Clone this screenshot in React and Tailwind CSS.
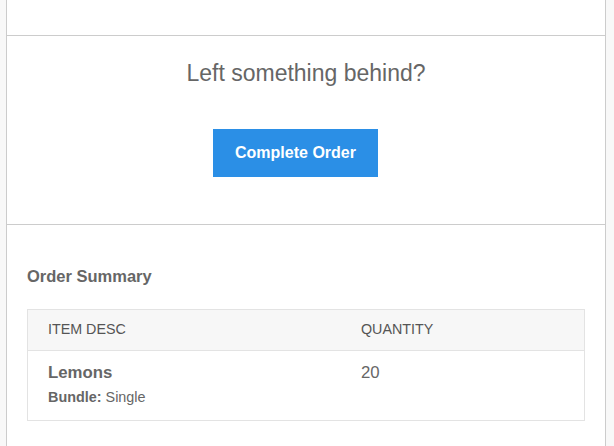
import React from 'react';

const App = () => {
  return (
    <div
      className="min-h-[446px] bg-[#f8f8f8] px-[6px]"
      style={{ fontFamily: '"Liberation Sans", Arial, sans-serif' }}
    >
      <div className="w-[600px] min-h-[446px] bg-white border-x border-[#cccccc]">
        <div className="h-[36px] border-b border-[#cccccc]" />

        <div className="h-[189px] border-b border-[#cccccc] pt-[23px]">
          <h1 className="text-center text-[23px] leading-[28px] text-[#666666]">
            Left something behind?
          </h1>
          <div className="mt-[42px] pl-[206px]">
            <button className="w-[165px] h-[48px] bg-[#2b8fe6] text-white text-[16px] font-bold">
              Complete Order
            </button>
          </div>
        </div>

        <div className="px-[20px] pt-[40px]">
          <h2 className="text-[16.5px] leading-[22px] font-bold text-[#666666]">Order Summary</h2>
          <div className="mt-[22px] border border-[#e3e3e3]">
            <div className="flex h-[41px] items-center bg-[#f7f7f7] border-b border-[#e3e3e3] text-[14.3px] text-[#555555]">
              <div className="w-[333px] pl-[20px]">ITEM DESC</div>
              <div>QUANTITY</div>
            </div>
            <div className="flex pt-[12px] pb-[14px] text-[#666666]">
              <div className="w-[333px] pl-[20px]">
                <div className="text-[16.8px] leading-[20px] font-bold">Lemons</div>
                <div className="mt-[6px] text-[14.4px] leading-[17px]">
                  <span className="font-bold">Bundle:</span> Single
                </div>
              </div>
              <div className="text-[16.8px] leading-[20px]">20</div>
            </div>
          </div>
        </div>
      </div>
    </div>
  );
};

export default App;
